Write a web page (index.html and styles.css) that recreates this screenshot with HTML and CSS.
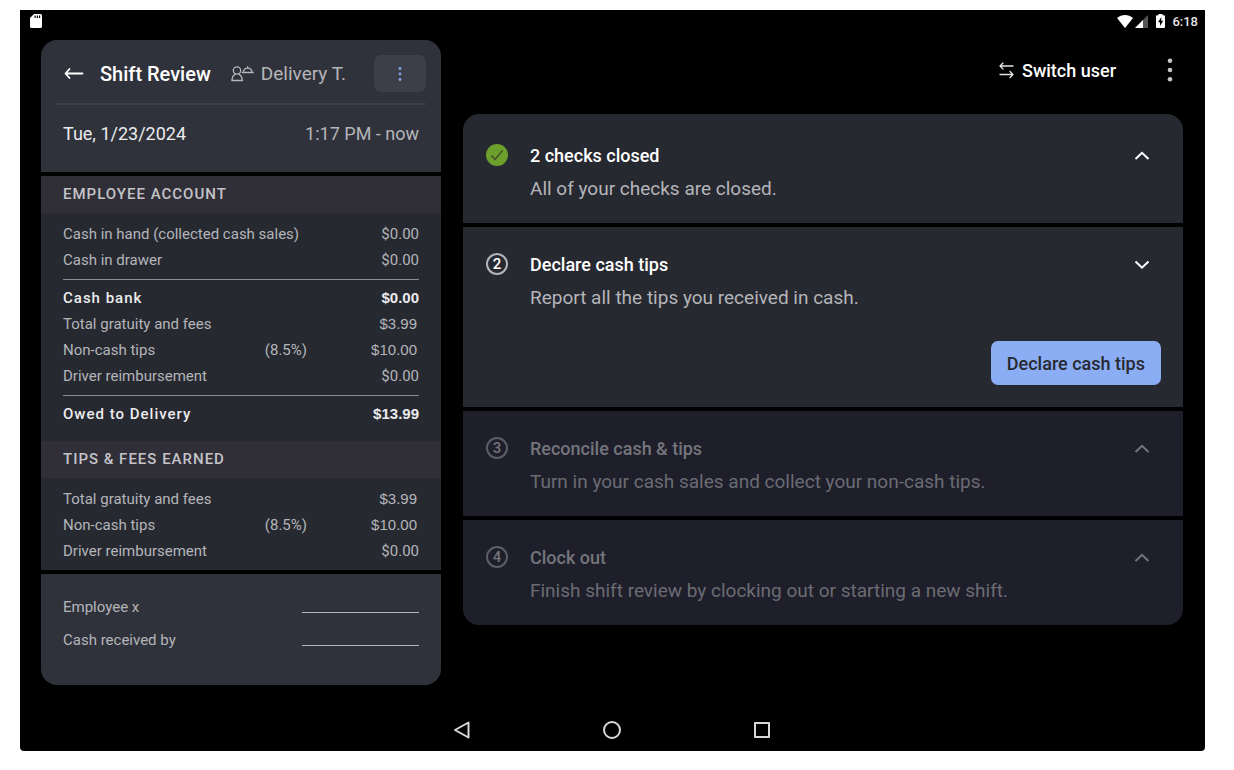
FILE: index.html
```html
<!DOCTYPE html>
<html lang="en">
<head>
    <meta charset="UTF-8">
    <meta name="viewport" content="width=device-width, initial-scale=1.0">
    <title>Shift Review</title>
    <link rel="stylesheet" href="styles.css">
</head>
<body>
    <div class="screen">
        <!-- Android status bar -->
        <div class="status-bar">
            <svg class="sd-card" width="12" height="14" viewBox="0 0 12 14"><path fill="#fff" fill-rule="evenodd" d="M4 0h6.500A1.500 1.500 0 0 1 12 1.500v11a1.500 1.500 0 0 1-1.500 1.500h-9A1.500 1.500 0 0 1 0 12.500V4zM4.500 1.500v2.500h1.200V1.500zM6.800 1.500v2.500H8V1.500zM9 1.500v2.500h1.200V1.500z"/></svg>
            <svg class="wifi" width="16" height="13" viewBox="0 0 16 13"><path fill="#fff" d="M0 3C4.500-1 11.500-1 16 3L8 13z"/></svg>
            <svg class="signal" width="13" height="13" viewBox="0 0 13 13"><path fill="#555" d="M13 0v13H0z"/><path fill="#fff" d="M8 5v8H0z"/></svg>
            <svg class="battery" width="9" height="14" viewBox="0 0 9 14"><path fill="#fff" d="M2.500 1.200V0h4v1.200H8a1 1 0 0 1 1 1V13a1 1 0 0 1-1 1H1a1 1 0 0 1-1-1V2.200a1 1 0 0 1 1-1z"/><path fill="#000" d="M5.300 3L2 8.300h2V12l3.200-5.300h-1.900z"/></svg>
            <span class="clock">6:18</span>
        </div>

        <main class="content">
            <section class="review">
                <header class="review-head">
                    <div class="title-row">
                        <button class="back" aria-label="Back">
                            <svg width="20" height="14" viewBox="0 0 20 14" fill="none" stroke="#fff" stroke-width="1.800" stroke-linecap="round" stroke-linejoin="round"><path d="M18.500 6.500H1.500M5.500 2L1.500 6.500L5.500 11"/></svg>
                        </button>
                        <h1>Shift Review</h1>
                        <div class="employee">
                            <svg width="23" height="17" viewBox="0 0 23 17" fill="none" stroke="#b4b5b9" stroke-width="1.300" stroke-linejoin="round" stroke-linecap="round"><circle cx="6" cy="5.500" r="3.700"/><path d="M4.200 9L1.800 11.500L.8 15.500h10.600l-1-4L8 9"/><path d="M11.200 7.500h11M12.300 7.300c.3-2.600 2-4.200 4.400-4.200s4.100 1.600 4.400 4.200M16.700 3V1.600"/></svg>
                            <span>Delivery T.</span>
                        </div>
                        <button class="more" aria-label="Shift options">
                            <svg width="4" height="16" viewBox="0 0 4 16" fill="#82a6ee"><circle cx="2" cy="2.500" r="1.400"/><circle cx="2" cy="8" r="1.400"/><circle cx="2" cy="13.500" r="1.400"/></svg>
                        </button>
                    </div>
                    <div class="date-row">
                        <span>Tue, 1/23/2024</span>
                        <span class="hours">1:17 PM - now</span>
                    </div>
                </header>

                <div class="accounts">
                    <h2>EMPLOYEE ACCOUNT</h2>
                    <div class="lines">
                        <table>
                            <tr><th colspan="2">Cash in hand (collected cash sales)</th><td>$0.00</td></tr>
                            <tr><th colspan="2">Cash in drawer</th><td>$0.00</td></tr>
                        </table>
                        <table>
                            <tr class="total"><th colspan="2">Cash bank</th><td>$0.00</td></tr>
                            <tr class="tips"><th colspan="2">Total gratuity and fees</th><td>$3.99</td></tr>
                            <tr class="tips"><th>Non-cash tips</th><td class="rate">(8.5%)</td><td>$10.00</td></tr>
                            <tr><th colspan="2">Driver reimbursement</th><td>$0.00</td></tr>
                        </table>
                        <table>
                            <tr class="total"><th colspan="2">Owed to Delivery</th><td>$13.99</td></tr>
                        </table>
                    </div>
                    <h2>TIPS &amp; FEES EARNED</h2>
                    <div class="lines earned">
                        <table>
                            <tr class="tips"><th colspan="2">Total gratuity and fees</th><td>$3.99</td></tr>
                            <tr class="tips"><th>Non-cash tips</th><td class="rate">(8.5%)</td><td>$10.00</td></tr>
                            <tr><th colspan="2">Driver reimbursement</th><td>$0.00</td></tr>
                        </table>
                    </div>
                </div>

                <form class="signatures">
                    <div class="sign-row">
                        <label for="employeeSign">Employee x</label>
                        <input type="text" id="employeeSign">
                    </div>
                    <div class="sign-row">
                        <label for="receivedBy">Cash received by</label>
                        <input type="text" id="receivedBy">
                    </div>
                </form>
            </section>

            <section class="closeout">
                <div class="actions">
                    <button class="switch-user">
                        <svg width="15" height="17" viewBox="0 0 15 17" fill="none" stroke="#e4e4e6" stroke-width="1.300" stroke-linecap="round" stroke-linejoin="round"><path d="M14 4H1M4 1L1 4L4 7M1 12.500h13M11 9.500l3 3l-3 3"/></svg>
                        Switch user
                    </button>
                    <button class="menu" aria-label="Menu">
                        <svg width="6" height="24" viewBox="0 0 6 24" fill="#c6c6c8"><circle cx="3" cy="2.800" r="2.300"/><circle cx="3" cy="12" r="2.300"/><circle cx="3" cy="21.200" r="2.300"/></svg>
                    </button>
                </div>

                <ol class="steps">
                    <li class="step done">
                        <span class="badge">
                            <svg width="14" height="14" viewBox="0 0 14 14" fill="none" stroke="#3a4a26" stroke-width="1.200"><path d="M1.500 7.500L5 11.500L12.500 2.500"/></svg>
                        </span>
                        <div class="step-text">
                            <h3>2 checks closed</h3>
                            <p>All of your checks are closed.</p>
                        </div>
                        <button class="toggle" aria-label="Toggle checks">
                            <svg width="16" height="10" viewBox="0 0 16 10"><path d="M1.500 8L8 1.800L14.500 8"/></svg>
                        </button>
                    </li>
                    <li class="step">
                        <span class="badge">2</span>
                        <div class="step-text">
                            <h3>Declare cash tips</h3>
                            <p>Report all the tips you received in cash.</p>
                        </div>
                        <button class="toggle" aria-label="Toggle declare cash tips">
                            <svg width="16" height="10" viewBox="0 0 16 10"><path d="M1.500 1.500L8 7.700L14.500 1.500"/></svg>
                        </button>
                        <button class="declare">Declare cash tips</button>
                    </li>
                    <li class="step pending">
                        <span class="badge">3</span>
                        <div class="step-text">
                            <h3>Reconcile cash &amp; tips</h3>
                            <p>Turn in your cash sales and collect your non-cash tips.</p>
                        </div>
                        <button class="toggle" aria-label="Toggle reconcile" disabled>
                            <svg width="16" height="10" viewBox="0 0 16 10"><path d="M1.500 8L8 1.800L14.500 8"/></svg>
                        </button>
                    </li>
                    <li class="step pending">
                        <span class="badge">4</span>
                        <div class="step-text">
                            <h3>Clock out</h3>
                            <p>Finish shift review by clocking out or starting a new shift.</p>
                        </div>
                        <button class="toggle" aria-label="Toggle clock out" disabled>
                            <svg width="16" height="10" viewBox="0 0 16 10"><path d="M1.500 8L8 1.800L14.500 8"/></svg>
                        </button>
                    </li>
                </ol>
            </section>
        </main>

        <!-- Android navigation bar -->
        <nav class="nav-bar">
            <button aria-label="Back"><svg width="18" height="20" viewBox="0 0 18 20"><path d="M15.500 2.500v15L2 10z"/></svg></button>
            <button aria-label="Home"><svg width="18" height="20" viewBox="0 0 18 20"><circle cx="9" cy="10" r="8"/></svg></button>
            <button aria-label="Recent apps"><svg width="18" height="20" viewBox="0 0 18 20"><rect x="2" y="3" width="14" height="14"/></svg></button>
        </nav>
    </div>
</body>
</html>
```

FILE: styles.css
```css
* {
    box-sizing: border-box;
}

body {
    margin: 0;
    padding: 10px 29px 19px 20px;
    min-height: 100vh;
    display: flex;
    background-color: #fff;
    font-family: Roboto, sans-serif;
    color: #fff;
}

h1, h2, h3, p, ol {
    margin: 0;
    padding: 0;
    font-weight: 500;
}

button {
    display: flex;
    align-items: center;
    justify-content: center;
    padding: 0;
    border: none;
    background: none;
    color: inherit;
    font-family: inherit;
    cursor: pointer;
}

.screen {
    flex: 1;
    display: flex;
    flex-direction: column;
    background-color: #000;
    border-radius: 0 0 4px 4px;
}

/* status bar */
.status-bar {
    display: flex;
    align-items: center;
    height: 22px;
    padding: 0 7px 0 10px;
}

.wifi {
    margin-left: auto;
}

.signal {
    margin: 0 8px 0 2px;
}

.clock {
    margin-left: 7px;
    font-size: 13px;
    font-weight: 500;
    color: #e4e4e6;
}

.content {
    flex: 1;
    display: grid;
    grid-template-columns: 5fr 9fr;
    align-items: start;
    gap: 22px;
    padding: 8px 22px 0 21px;
}

/* left panel */
.review {
    display: flex;
    flex-direction: column;
    gap: 4px;
    border-radius: 16px;
    overflow: hidden;
}

.review-head {
    padding: 15px 15px 0;
    background-color: #30323b;
}

.title-row {
    display: flex;
    align-items: center;
    padding-bottom: 11px;
    border-bottom: 2px solid #3d3f48;
}

.back {
    margin: 0 16px 0 8px;
}

h1 {
    font-size: 20px;
}

.employee {
    display: flex;
    align-items: center;
    gap: 7px;
    margin-left: 20px;
    font-size: 19px;
    color: #b4b5b9;
}

.more {
    width: 52px;
    height: 37px;
    margin-left: auto;
    border-radius: 7px;
    background-color: #3d3f48;
}

.date-row {
    display: flex;
    justify-content: space-between;
    padding: 17px 7px 26px;
    font-size: 18px;
    line-height: 24px;
    color: #ececee;
}

.date-row .hours {
    color: #b4b5b9;
}

.accounts {
    background-color: #272931;
}

h2 {
    padding: 0 22px;
    background-color: #302f38;
    font-size: 15px;
    line-height: 37px;
    letter-spacing: 1px;
    color: #c4c4c8;
}

.lines {
    padding: 8px 22px 14px;
}

.lines.earned {
    padding-bottom: 6px;
}

table {
    width: 100%;
    border-spacing: 0;
    font-size: 15px;
    line-height: 26px;
    color: #b4b5b9;
}

table + table {
    margin-top: 6px;
    border-top: 1px solid #8a8b91;
    padding-top: 5px;
}

th, td {
    padding: 0;
    font-weight: 400;
    text-align: left;
}

td {
    width: 112px;
    text-align: right;
}

td.rate {
    width: auto;
}

.total th {
    font-weight: 500;
    letter-spacing: 1px;
    color: #ececee;
}

.total td {
    font-family: "Liberation Sans", sans-serif;
    font-weight: 700;
    color: #ececee;
}

.tips td:last-child {
    padding-right: 2px;
    font-family: "Liberation Sans", sans-serif;
}

.signatures {
    padding: 16px 22px 29px;
    background-color: #30323b;
}

.sign-row {
    display: flex;
    justify-content: space-between;
    align-items: center;
    height: 33px;
    font-size: 15px;
    color: #b4b5b9;
}

.sign-row input {
    width: 117px;
    height: 12px;
    padding: 0;
    border: none;
    border-bottom: 1px solid #b4b5b9;
    background: none;
    color: inherit;
    font: inherit;
}

/* right side */
.actions {
    display: flex;
    justify-content: flex-end;
    align-items: center;
    gap: 51px;
    height: 60px;
    padding-right: 10px;
    margin-bottom: 14px;
}

.switch-user {
    gap: 8px;
    font-size: 18px;
    font-weight: 500;
}

.steps {
    display: flex;
    flex-direction: column;
    gap: 4px;
    border-radius: 16px;
    overflow: hidden;
    list-style: none;
}

.step {
    display: grid;
    grid-template-columns: 22px 1fr 38px;
    column-gap: 22px;
    padding: 26px 22px 22px 23px;
    background-color: #272931;
    line-height: 24px;
}

.step.done {
    padding-top: 30px;
}

.badge {
    display: flex;
    align-items: center;
    justify-content: center;
    width: 22px;
    height: 22px;
    border: 2px solid #b4b5b9;
    border-radius: 50%;
    font-size: 15px;
    font-weight: 500;
}

.done .badge {
    border: none;
    background-color: #6c9f2b;
}

h3 {
    font-size: 18px;
}

.step p {
    margin-top: 9px;
    font-size: 19px;
    font-weight: 400;
    color: #b4b5b9;
}

.toggle {
    height: 24px;
}

.toggle svg {
    fill: none;
    stroke: #fff;
    stroke-width: 2;
}

.declare {
    grid-column: 1 / -1;
    justify-self: end;
    height: 44px;
    margin-top: 31px;
    padding: 0 16px;
    border-radius: 7px;
    background-color: #8badf4;
    color: #272931;
    font-size: 18px;
    font-weight: 500;
}

.pending {
    background-color: #1e1f2a;
    color: #74757c;
}

.pending .badge {
    border-color: #5c5d65;
}

.pending p {
    color: #6b6c73;
}

.pending .toggle svg {
    stroke: #74757c;
}

/* navigation bar */
.nav-bar {
    display: flex;
    justify-content: center;
    gap: 132px;
    padding: 0 2px 11px 0;
}

.nav-bar svg {
    fill: none;
    stroke: #d8d8da;
    stroke-width: 2;
    stroke-linejoin: round;
}
```
